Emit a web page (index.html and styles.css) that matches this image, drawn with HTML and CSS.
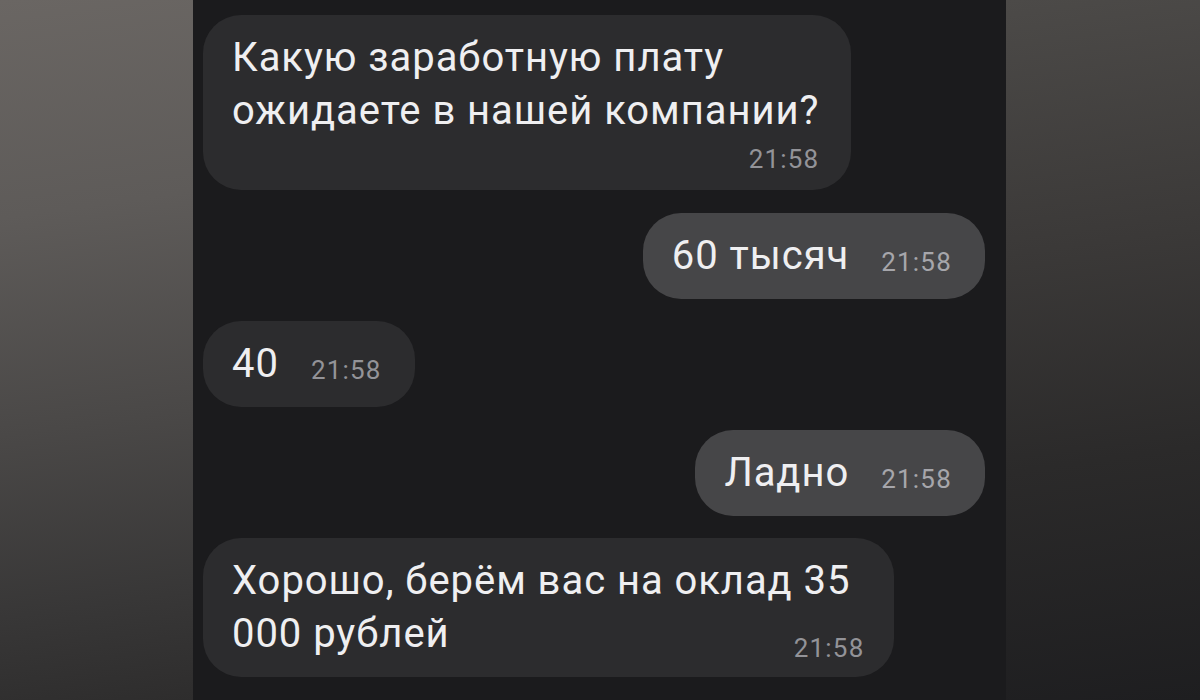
FILE: index.html
```html
<!DOCTYPE html>
<html lang="ru">
<head>
<meta charset="utf-8">
<title>Чат</title>
<link rel="stylesheet" href="styles.css">
</head>
<body>
<div class="page">
  <div class="side side-left"></div>
  <main class="chat">
    <div class="msg in below">
      <p class="text">Какую заработную плату<br>ожидаете в нашей компании?</p>
      <span class="time">21:58</span>
    </div>
    <div class="msg out inline">
      <p class="text">60 тысяч</p>
      <span class="time">21:58</span>
    </div>
    <div class="msg in inline">
      <p class="text">40</p>
      <span class="time">21:58</span>
    </div>
    <div class="msg out inline">
      <p class="text">Ладно</p>
      <span class="time">21:58</span>
    </div>
    <div class="msg in overlay">
      <p class="text">Хорошо, берём вас на оклад 35<br>000 рублей</p>
      <span class="time">21:58</span>
    </div>
  </main>
  <div class="side side-right"></div>
</div>
</body>
</html>
```

FILE: styles.css
```css
* { box-sizing: border-box; }

html, body {
  margin: 0;
  padding: 0;
  width: 1200px;
  height: 700px;
  overflow: hidden;
  background: #1b1b1d;
  font-family: Roboto, "Noto Sans", "DejaVu Sans", sans-serif;
}

.page {
  display: grid;
  grid-template-columns: 193px 813px 1fr;
  height: 700px;
}

.side-left {
  background: linear-gradient(172deg, #6a6663 0%, #5e5b59 30%, #4a4847 60%, #383737 85%, #2e2d2d 100%);
}

.side-right {
  background: linear-gradient(172deg, #4c4a48 0%, #3b3938 35%, #2b2a2a 65%, #1e1e20 100%);
}

.chat {
  background: #1b1b1d;
  padding: 15px 21px 0 10px;
  display: flex;
  flex-direction: column;
  align-items: flex-start;
  gap: 22.6px;
  overflow: hidden;
}

.msg {
  border-radius: 38px;
  color: #efeff1;
}

.msg.in { background: #2c2c2e; }
.msg.out { background: #464648; align-self: flex-end; }

.text {
  margin: 0;
  font-size: 40px;
  line-height: 53px;
  letter-spacing: 0.95px;
  white-space: nowrap;
}

.time {
  font-size: 26px;
  line-height: 30px;
  letter-spacing: 1.2px;
  color: #939398;
}

.msg.out .time { color: #a6a6ab; }

.inline {
  display: flex;
  align-items: flex-end;
  gap: 32px;
  padding: 16px 33px 17px 29px;
}

.inline .time { padding-bottom: 5px; }

.below {
  display: flex;
  flex-direction: column;
  padding: 16px 32px 16px 29px;
}

.below .time {
  align-self: flex-end;
  margin-top: 7px;
}

.overlay {
  display: grid;
  padding: 16px 30px 17px 29px;
}

.overlay .text,
.overlay .time {
  grid-area: 1 / 1;
}

.overlay .text { padding-right: 14px; }

.overlay .time {
  justify-self: end;
  align-self: end;
  margin-bottom: -3px;
}
```
